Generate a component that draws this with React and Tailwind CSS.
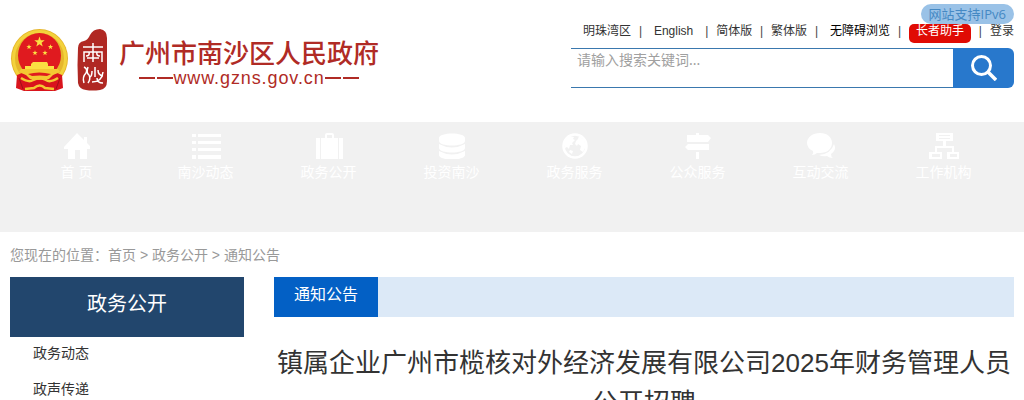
import React from 'react';

const star = (cx, cy, r) =>
  Array.from({ length: 10 }, (_, i) => {
    const a = -Math.PI / 2 + (i * Math.PI) / 5;
    const d = i % 2 ? r * 0.4 : r;
    return `${cx + d * Math.cos(a)},${cy + d * Math.sin(a)}`;
  }).join(' ');

function Emblem() {
  return (
    <svg viewBox="0 0 60 66" className="h-[66px] w-[60px] shrink-0" aria-hidden="true">
      <ellipse cx="29.5" cy="30.5" rx="28.5" ry="29.5" fill="#e6b62b" />
      <ellipse cx="29.5" cy="30.5" rx="26" ry="27" fill="none" stroke="#f3d23c" strokeWidth="3" />
      <path d="M7 47 12 45 29 52 47 45 52 47 53 60 45 63H14L6 60z" fill="#d9141d" />
      <ellipse cx="29.5" cy="27.5" rx="21.5" ry="22.5" fill="#e01a1f" />
      <g fill="#fbdf42">
        <polygon points={star(29.5, 14, 5.5)} />
        <polygon points={star(19, 19, 2.8)} />
        <polygon points={star(40.5, 19, 2.8)} />
        <polygon points={star(25, 25, 2.8)} />
        <polygon points={star(35, 25, 2.8)} />
        <path d="M23 34h14l1 2v2h6v4H15v-4h6v-2z" />
        <path d="M11 41h37l2 3-7 3-4 4H20l-4-4-7-3z" fill="#f4c832" />
      </g>
      <path d="M18 46q11-3 23 0l-4 2q-7-1-15 0z" fill="#e01a1f" />
      <path d="M11 50q8 5 12 2 7-3 13 0 4 3 12-2M15 61l9-1q6-5 11 0l9 1" fill="none" stroke="#f4c832" strokeWidth="2.5" />
      <path d="M9 50l4 11M50 50l-4 11" stroke="#9f101b" strokeWidth="1" />
    </svg>
  );
}

function Seal() {
  return (
    <svg viewBox="0 0 32 64" className="ml-[7px] h-16 w-8 shrink-0" aria-hidden="true">
      <path d="M1 20Q1 14 7 13q4-1 6-6 3-6 10-6 7 1 7 9v43q0 8-7 9-8 1-14 0-7-1-8-7-1-18 0-35z" fill="#b02823" />
      <g fill="none" stroke="#fff" strokeWidth="1.5">
        <path d="M6 19h20M16 15v19M7 34V24h18v10M9 28q4 0 3-4M23 28q-4 0-3-4M10 30h12" />
        <path d="M7 39q4 2 2 6-4 4-2 10M11 39q-2 6 1 8 2 4-1 8M18 39v10M15 43q0 5-2 6M21 42q0 5 5 6M26 44q-1 10-11 10M20 50q0 5 6 5" />
      </g>
    </svg>
  );
}

const icons = {
  home: <path d="M13 0 0 14v2h4v10h7v-9h5v9h7V16h3v-3l-3-3V4h-3v3z" />,
  list: (
    <path d="M-1 1h4v3h-4zM5 1h23v3H5zM-1 8h4v3h-4zM5 8h23v3H5zM-1 15h4v3h-4zM5 15h23v3H5zM-1 22h4v4h-4zM5 22h23v4H5z" />
  ),
  case: (
    <path fillRule="evenodd" d="M0 5h4v21H0zM5 5h4V2q0-2 2-2h5q2 0 2 2v3h4v21H5zm6 0h5V2h-5zM23 5h4v21h-4z" />
  ),
  data: (
    <path d="M0 5c0-6 26-6 26 0v3c0 6-26 6-26 0zM0 11q13 7 26 0v4c0 6-26 6-26 0zM0 18q13 7 26 0v4c0 6-26 6-26 0z" />
  ),
  globe: (
    <>
      <circle cx="13" cy="13" r="11.5" fill="none" stroke="currentColor" strokeWidth="2.5" />
      <path d="M2 9 7 3l5 1-1 2 2 1-3 3 1 2-3 0-1 4-2-2-2 1zM14 8l2-2 1-3 5 4 2 6-3 6-3-2 1-4-3-2-1 2-2-2zM8 17l3 1-1 3-3-2z" />
    </>
  ),
  sign: <path d="M11 2V0h3v2h9l3 3-3 4H2V2zM3 11h21v6H3l-3-3zM11 19h3v7h-3z" />,
  chat: (
    <>
      <path d="M12 0c7 0 12 4 12 10s-5 10-12 10l-3 0q-2 2-5 2 2-2 1-4Q-1 15-1 10C-1 4 5 0 12 0z" />
      <path d="M26 11q3 6-3 10 0 3 2 4-4 0-6-2-4 1-8-1 12-1 15-11z" />
    </>
  ),
  org: (
    <path fillRule="evenodd" d="M5 0h17v8h-7v5h8v6h5v7H16v-7h5v-4H6v4h5v7H-2v-7h6v-6h8V8H5zm3 2v1h11V2zm0 3v1h11V5zM1 21v3h8v-3zm18 0v3h7v-3z" />
  ),
};

const nav = [
  ['首 页', 'home'],
  ['南沙动态', 'list'],
  ['政务公开', 'case'],
  ['投资南沙', 'data'],
  ['政务服务', 'globe'],
  ['公众服务', 'sign'],
  ['互动交流', 'chat'],
  ['工作机构', 'org'],
];

const Bar = () => <span className="text-[#444]">|</span>;

export default function App() {
  return (
    <div className="overflow-hidden bg-white font-['Liberation_Sans','Noto_Sans_CJK_SC',sans-serif] text-sm text-[#333]">
      <header className="flex h-[122px] justify-between px-2.5">
        <a href="#home" className="flex pt-7 text-[#b02b25]">
          <Emblem />
          <Seal />
          <span className="ml-2.5 flex flex-col items-center pt-2 whitespace-nowrap">
            <span className="text-[26px] leading-9 font-medium">广州市南沙区人民政府</span>
            <span className="flex items-center text-lg leading-3 tracking-wider">
              <i className="h-0.5 w-4 bg-current" />
              <i className="ml-0.5 h-0.5 w-4 bg-current" />
              www.gzns.gov.cn
              <i className="mr-0.5 h-0.5 w-4 bg-current" />
              <i className="h-0.5 w-4 bg-current" />
            </span>
          </span>
        </a>
        <div className="flex w-[443px] flex-col pt-1">
          <a href="#ipv6" className="relative z-10 h-5 self-end rounded-full bg-[#9ac2e7] px-2 font-['Open_Sans','Noto_Sans_CJK_SC',sans-serif] text-[13px] leading-5 text-[#4589c4]">
            网站支持IPv6
          </a>
          <nav className="flex h-5 items-start justify-between pl-3 text-xs leading-[14px] whitespace-nowrap">
            <a href="#mingzhu">明珠湾区</a>
            <Bar />
            <a href="#en" className="px-1">English</a>
            <Bar />
            <a href="#hans">简体版</a>
            <Bar />
            <a href="#hant">繁体版</a>
            <Bar />
            <a href="#access" className="pl-1 text-black">无障碍浏览</a>
            <Bar />
            <a href="#elder" className="h-[19px] rounded-[5px] bg-[#e00b04] px-[7px] text-white">长者助手</a>
            <Bar />
            <a href="#login">登录</a>
          </nav>
          <form className="mt-1 flex h-10" onSubmit={(e) => e.preventDefault()}>
            <input
              type="text"
              aria-label="搜索关键词"
              placeholder="请输入搜索关键词..."
              className="min-w-0 flex-1 border-y border-[#3a78ae] px-1.5 pb-4 font-['Noto_Sans','Noto_Sans_CJK_SC',sans-serif] text-sm leading-5 outline-none placeholder:text-[#a0a0a0]"
            />
            <button type="submit" aria-label="搜索" className="flex w-[61px] items-center justify-center rounded-r-md bg-[#2878cc] text-white">
              <svg viewBox="0 0 26 26" className="size-[26px]" fill="none" stroke="currentColor" strokeWidth="3">
                <circle cx="10.5" cy="10.5" r="9" />
                <path d="m17 17 8 8" strokeWidth="3.5" />
              </svg>
            </button>
          </form>
        </div>
      </header>

      <nav className="grid h-[110px] grid-cols-[129fr_repeat(7,123fr)] bg-[#f1f1f1] pt-[11px] pr-[19px] pl-[15px] text-white">
        {nav.map(([label, icon]) => (
          <a key={label} href={'#' + icon} className="flex flex-col items-center first:pr-1.5">
            <svg viewBox="-2 0 30 26" className="h-[26px] w-[30px]" fill="currentColor" aria-hidden="true">
              {icons[icon]}
            </svg>
            <span className="mt-[3px] leading-5">{label}</span>
          </a>
        ))}
      </nav>

      <div className="px-2.5">
        <p className="pt-3 pb-2.5 leading-[23px] text-[#999]">
          您现在的位置：<a href="#home">首页</a> &gt; <a href="#open">政务公开</a> &gt; <a href="#notice">通知公告</a>
        </p>
        <div className="flex items-start gap-[30px]">
          <aside className="w-[234px] shrink-0">
            <h2 className="h-[60px] bg-[#22466d] text-center text-xl leading-[54px] text-white">政务公开</h2>
            <ul className="pl-[23px]">
              <li className="h-9 leading-8"><a href="#news">政务动态</a></li>
              <li className="h-9 leading-8"><a href="#voice">政声传递</a></li>
            </ul>
          </aside>
          <main className="min-w-0 flex-1">
            <div className="flex h-10 bg-[#dce9f7]">
              <h3 className="bg-[#0360c5] px-5 text-base leading-9 text-white">通知公告</h3>
            </div>
            <h1 className="pt-[26px] text-center text-[26px] leading-10">
              镇属企业广州市榄核对外经济发展有限公司2025年财务管理人员公开招聘
            </h1>
          </main>
        </div>
      </div>
    </div>
  );
}
